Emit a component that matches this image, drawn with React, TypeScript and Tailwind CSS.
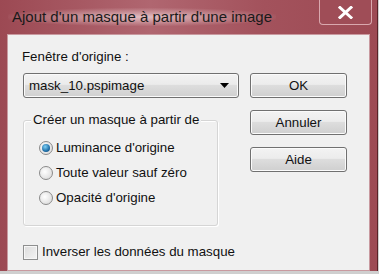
import React from "react";

function Radio({ checked, label }: { checked?: boolean; label: string }) {
  return (
    <div className="flex items-center h-[25px] whitespace-nowrap">
      <div className="w-[14px] h-[14px] rounded-full border border-[#8a8a8a] bg-[radial-gradient(circle_at_40%_40%,#ffffff,#d4d4d4)] flex items-center justify-center">
        {checked && (
          <div className="w-[8px] h-[8px] rounded-full bg-[radial-gradient(circle_at_40%_35%,#7fd0f5,#1f6fa8_60%,#0c3f6a)]" />
        )}
      </div>
      <span className="ml-[3px]">{label}</span>
    </div>
  );
}

function Btn({ label }: { label: string }) {
  return (
    <div className="w-[97px] h-[25px] rounded-[3px] border border-[#707070] bg-[linear-gradient(#f3f3f3,#ececec_45%,#dddddd_50%,#cfcfcf)] flex items-center justify-center shadow-[inset_0_0_0_1px_#fbfbfb]">
      {label}
    </div>
  );
}

export default function App() {
  return (
    <div
      className="w-[379px] h-[274px] bg-[#cfcfcf] text-[13.3px] leading-[16px] text-[#111] overflow-hidden"
      style={{ fontFamily: '"Liberation Sans", Arial, sans-serif' }}
    >
      <div className="w-[378px] h-[271px] border-r border-[#5a2228] bg-[linear-gradient(90deg,#9c4953,#b06670_40%,#a3525c_70%,#9d4a54)] flex flex-col">
        <div className="h-[34px] shrink-0 flex items-start relative">
          <div className="ml-[8px] mt-[8px] text-[15px] leading-[18px] text-[#1a1a1a] px-1 rounded-[12px] bg-[radial-gradient(ellipse_at_center,rgba(235,205,208,0.85),rgba(235,205,208,0)_75%)]">
            Ajout d'un masque à partir d'une image
          </div>
          <div className="absolute right-[5px] top-0 w-[53px] h-[25px] rounded-b-[4px] border border-t-0 border-[#d9a8ae] bg-[#9f4d57] flex items-center justify-center">
            <svg width="15" height="13" viewBox="0 0 15 13">
              <path d="M2 1.5 L13 11.5 M13 1.5 L2 11.5" stroke="#ffffff" strokeWidth="3" strokeLinecap="square" />
            </svg>
          </div>
        </div>
        <div className="flex-1 ml-[7px] mr-[7px] bg-[#f0f0f0] border border-[#c99aa0] flex">
          <div className="flex flex-col pl-[15px] pt-[13px] w-[226px] shrink-0">
            <div className="h-[17px] leading-[17px] ml-[-1px] whitespace-nowrap">Fenêtre d'origine :</div>
            <div className="mt-[8px] w-[216px] h-[25px] shrink-0 rounded-[3px] border border-[#707070] bg-[linear-gradient(#f3f3f3,#ebebeb_45%,#dddddd_50%,#d0d0d0)] flex items-center pl-[5px] pr-[9px] shadow-[inset_0_0_0_1px_#fafafa]">
              <span className="flex-1">mask_10.pspimage</span>
              <svg width="9" height="5" viewBox="0 0 9 5">
                <path d="M0 0 H9 L4.5 5 Z" fill="#000" />
              </svg>
            </div>
            <div className="relative mt-[22px] w-[195px] h-[106px] shrink-0 rounded-[3px] border border-[#d5d5d5] shadow-[inset_1px_1px_0_#ffffff,1px_1px_0_#ffffff]">
              <div className="absolute left-[7px] top-[-9px] bg-[#f0f0f0] px-[2px] leading-[16px] whitespace-nowrap">
                Créer un masque à partir de
              </div>
              <div className="pt-[14px] pl-[15px] flex flex-col">
                <Radio checked label="Luminance d'origine" />
                <Radio label="Toute valeur sauf zéro" />
                <Radio label="Opacité d'origine" />
              </div>
            </div>
            <div className="mt-[18px] flex items-center whitespace-nowrap">
              <div className="w-[15px] h-[15px] shrink-0 border border-[#8e8f8f] bg-[linear-gradient(135deg,#dcdcdc,#f4f4f4)] shadow-[inset_0_0_0_1px_#f7f7f7]" />
              <span className="ml-[4px]">Inverser les données du masque</span>
            </div>
          </div>
          <div className="flex flex-col pl-[16px] pt-[38px] gap-[12px]">
            <Btn label="OK" />
            <Btn label="Annuler" />
            <Btn label="Aide" />
          </div>
        </div>
      </div>
    </div>
  );
}
